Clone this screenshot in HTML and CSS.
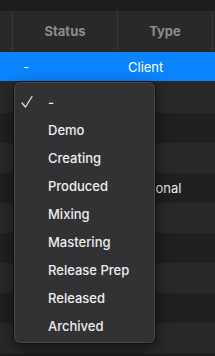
FILE: index.html
```html
<!DOCTYPE html>
<html lang="en">
<head>
  <meta charset="UTF-8" />
  <title>Status</title>
  <link rel="stylesheet" href="styles.css">
</head>
<body>
  <div class="topbar"></div>

  <div class="table">
    <div class="row head">
      <div class="cell gutter"></div>
      <div class="cell status">Status</div>
      <div class="cell type">Type</div>
      <div class="cell end"></div>
    </div>
    <div class="row selected">
      <div class="cell gutter"></div>
      <div class="cell">-</div>
      <div class="cell">Client</div>
      <div class="cell end"></div>
    </div>
    <div class="row first"><div class="cell gutter"></div><div class="cell"></div><div class="cell"></div><div class="cell end"></div></div>
    <div class="row"><div class="cell gutter"></div><div class="cell"></div><div class="cell"></div><div class="cell end"></div></div>
    <div class="row"><div class="cell gutter"></div><div class="cell"></div><div class="cell"></div><div class="cell end"></div></div>
    <div class="row"><div class="cell gutter"></div><div class="cell"></div><div class="cell">Personal</div><div class="cell end"></div></div>
    <div class="row"><div class="cell gutter"></div><div class="cell"></div><div class="cell"></div><div class="cell end"></div></div>
    <div class="row"><div class="cell gutter"></div><div class="cell"></div><div class="cell"></div><div class="cell end"></div></div>
    <div class="row"><div class="cell gutter"></div><div class="cell"></div><div class="cell"></div><div class="cell end"></div></div>
    <div class="row"><div class="cell gutter"></div><div class="cell"></div><div class="cell"></div><div class="cell end"></div></div>
    <div class="row"><div class="cell gutter"></div><div class="cell"></div><div class="cell"></div><div class="cell end"></div></div>
  </div>

  <ul class="menu">
    <li class="item checked">
      <svg class="check" width="12" height="12" viewBox="0 0 12 12">
        <path d="M1 7 L4.5 11 L11 0.5" fill="none" stroke="#e6e6e6" stroke-width="1.2" stroke-linecap="round" stroke-linejoin="round"/>
      </svg>
      -
    </li>
    <li class="item">Demo</li>
    <li class="item">Creating</li>
    <li class="item">Produced</li>
    <li class="item">Mixing</li>
    <li class="item">Mastering</li>
    <li class="item">Release Prep</li>
    <li class="item">Released</li>
    <li class="item">Archived</li>
  </ul>
</body>
</html>
```
FILE: styles.css
```css
body {
  margin: 0;
  background: #1f1f1f;
  font-family: Inter, "Liberation Sans", sans-serif;
  font-size: 13px;
  color: #ececec;
  overflow: hidden;
}
.topbar {
  height: 11px;
  background: #1e1e1e;
}
.row {
  display: grid;
  grid-template-columns: 13px 105px 95px 2px;
  height: 30px;
  background: #202020;
}
.row:nth-child(odd) {
  background: #292929;
}
.row.first {
  height: 32px;
}
.cell {
  display: flex;
  align-items: center;
  padding-left: 10px;
}
.gutter, .end {
  padding: 0;
}
.head {
  height: 41px;
  background: #2b2b2b;
  border-bottom: 1px solid #242424;
  box-sizing: border-box;
}
.head .cell {
  justify-content: center;
  padding: 0;
  font-weight: 700;
  font-size: 13px;
  color: #8c8c8c;
  border-right: 1px solid #3a3a3a;
}
.head .end {
  border-right: none;
}
.row.selected {
  height: 29px;
  background: #0a84ff;
  color: #ffffff;
}
.menu {
  position: absolute;
  left: 13px;
  top: 81px;
  width: 143px;
  height: 263px;
  box-sizing: border-box;
  margin: 0;
  padding: 6px 0 0;
  list-style: none;
  background: #323234;
  border: 1px solid #111;
  box-shadow: inset 0 0 0 1px #48484a, 0 6px 16px rgba(0, 0, 0, 0.5);
  border-radius: 7px;
}
.item {
  position: relative;
  height: 28px;
  line-height: 28px;
  padding-left: 34px;
  font-weight: 500;
  color: #eeeeee;
}
.check {
  position: absolute;
  left: 7px;
  top: 8px;
}
```
